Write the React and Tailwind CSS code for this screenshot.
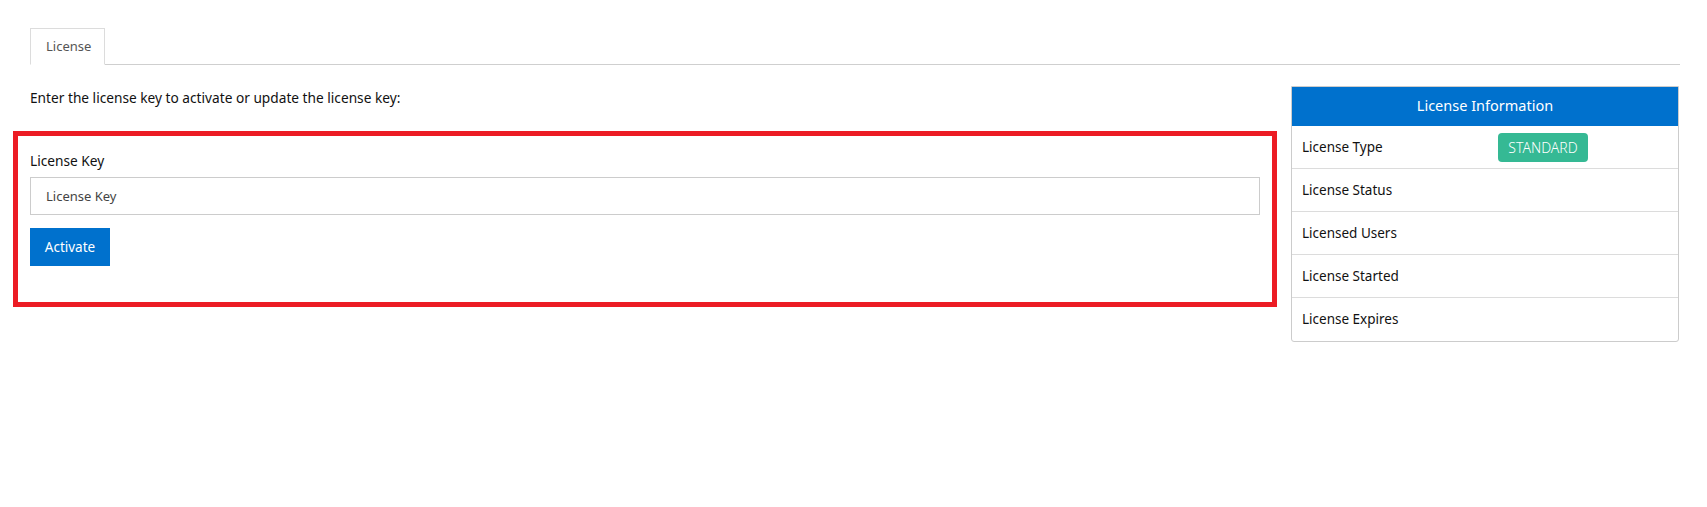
export default function App() {
  const rows = ["License Status", "Licensed Users", "License Started", "License Expires"];
  return (
    <div className="min-h-[507px] bg-white pl-[30px] pr-[28px] pt-[28px] text-[14px] text-[#111]" style={{ fontFamily: '"Noto Sans", "Open Sans", sans-serif' }}>
      <div className="flex border-b border-[#cfcfcf] w-[1650px]">
        <div className="-mb-px h-[37px] w-[75px] border border-b-white border-[#dcdcdc] bg-white text-[#555] text-[13px] flex items-center pl-[15px]">
          License
        </div>
      </div>
      <div className="flex items-start gap-[31px] pt-[21px]">
        <div className="w-[1230px] shrink-0">
          <p className="mt-[2px] leading-[20px] text-[13.7px]">Enter the license key to activate or update the license key:</p>
          <div className="mt-[23px] -mx-[17px] border-[5px] border-[#ec1c24] px-[12px] pt-[15px] pb-[36px]">
            <label className="block leading-[20px] text-[13.7px]">License Key</label>
            <input
              className="mt-[6px] block h-[38px] w-full border border-[#cccccc] px-[15px] text-[13px] text-[#444] placeholder:text-[#444] outline-none"
              placeholder="License Key"
              style={{ fontFamily: '"Noto Sans", "Open Sans", sans-serif' }}
            />
            <button className="mt-[13px] h-[38px] w-[80px] bg-[#0071cd] text-white text-[13.5px]" style={{ fontFamily: '"Noto Sans", "Open Sans", sans-serif' }}>
              Activate
            </button>
          </div>
        </div>
        <div className="w-[388px] shrink-0 border border-[#cccccc] rounded-b-[3px] overflow-hidden">
          <div className="h-[40px] -mt-px bg-[#0071cd] text-white text-[14.5px] flex items-center justify-center">
            License Information
          </div>
          <div className="h-[43px] border-b border-[#dcdcdc] flex items-center pl-[10px]">
            <div className="w-[196px] text-[13.5px]">License Type</div>
            <span className="h-[29px] w-[90px] rounded-[4px] bg-[#35b994] text-white text-[14px] flex items-center justify-center font-light">STANDARD</span>
          </div>
          {rows.map((r, i) => (
            <div key={r} className={"h-[43px] flex items-center pl-[10px] text-[13.5px] " + (i < rows.length - 1 ? "border-b border-[#dcdcdc]" : "")}>
              {r}
            </div>
          ))}
        </div>
      </div>
    </div>
  );
}
